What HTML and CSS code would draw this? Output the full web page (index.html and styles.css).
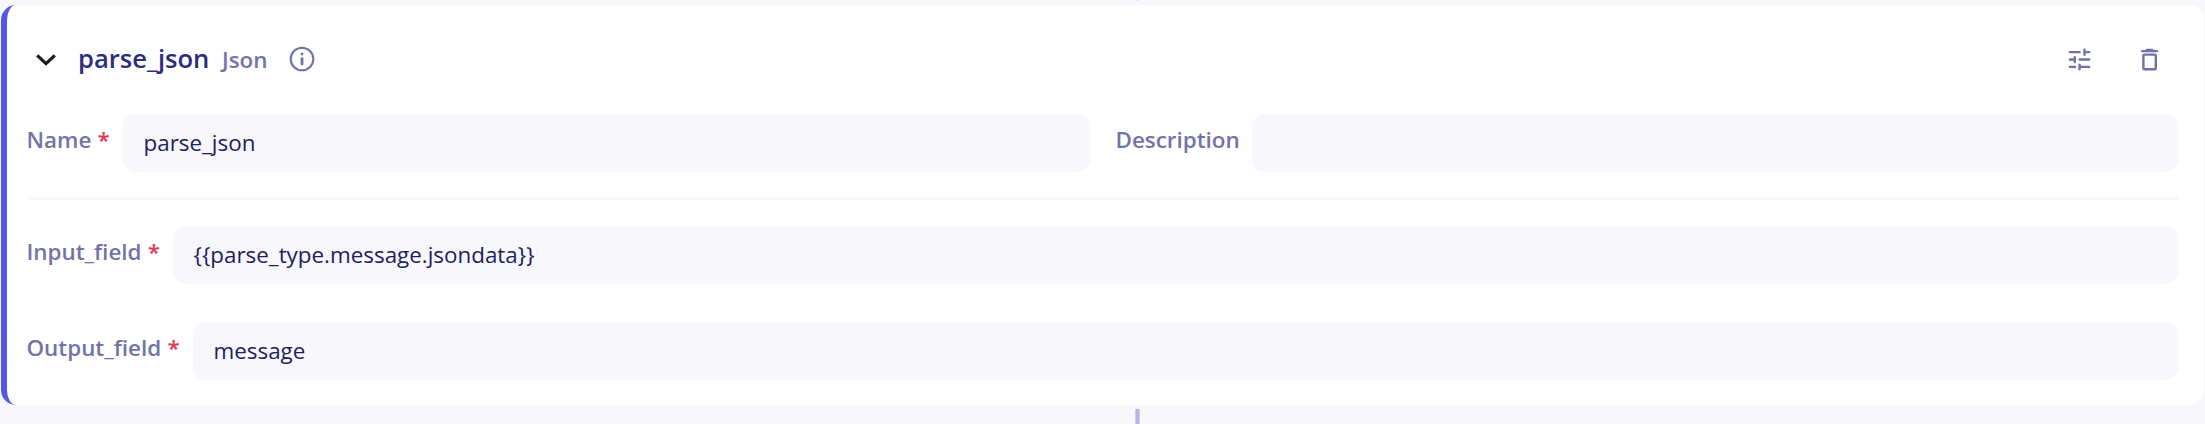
FILE: index.html
```html
<!DOCTYPE html>
<html lang="en">
<head>
<meta charset="utf-8">
<title>parse_json</title>
<link rel="stylesheet" href="styles.css">
</head>
<body>
<div class="connector connector-top"></div>
<section class="card">
  <header class="card-header">
    <svg class="chevron" viewBox="0 0 20 12"><path d="M1.2 1.4 10 9.6l8.800-8.200" /></svg>
    <h2 class="title">parse_json</h2>
    <span class="type">Json</span>
    <svg class="info" viewBox="0 0 26 26"><circle cx="13" cy="13" r="11.300"/><path d="M13 12.600v5.400"/><circle class="dot" cx="13" cy="8.100" r="1.450"/></svg>
    <div class="actions">
      <svg class="icon" viewBox="0 0 30 30"><path d="M5.900 8.100h9.700M20.500 8.100h4.700M20.500 5.800v4.900M5.900 15.500h5M10.800 13.200v4.700M15.500 15.500h9.700M5.900 22.900h5M15.600 20.600v4.700M15.600 22.900h9.600"/></svg>
      <svg class="icon" viewBox="0 0 30 30"><path d="M8.200 7.100h14.900M12.900 6h5.300"/><rect x="9.400" y="10.600" width="12.400" height="14.700" rx="1"/></svg>
    </div>
  </header>
  <div class="row row-split">
    <div class="field field-name"><label>Name <b>*</b></label><div class="input">parse_json</div></div>
    <div class="field field-desc"><label>Description</label><div class="input"></div></div>
  </div>
  <div class="divider"></div>
  <div class="row"><div class="field field-in"><label>Input_field <b>*</b></label><div class="input">{{parse_type.message.jsondata}}</div></div></div>
  <div class="row row-last"><div class="field field-out"><label>Output_field <b>*</b></label><div class="input">message</div></div></div>
</section>
<div class="connector connector-bottom"></div>
</body>
</html>
```
FILE: styles.css
```css
* { box-sizing: border-box; }
body {
  margin: 0;
  height: 424px;
  overflow: hidden;
  background: #f7f7fc;
  color: #1f2060;
  font-family: "Open Sans", "Noto Sans", sans-serif;
  font-size: 22.5px;
}
.connector { width: 5px; margin-left: 1135px; background: #b3b3e6; }
.connector-top { width: 1px; height: 1px; margin-left: 1137px; margin-bottom: 4px; }
.connector-bottom { height: 15px; margin-top: 4px; border: solid #cfcff0; border-width: 0 1px; }
.card {
  height: 400px;
  margin: 0 1px;
  padding: 0 26px 0 20px;
  background: #fff;
  border-left: 6px solid #5458e8;
  border-radius: 15px;
}
.card-header { display: flex; align-items: center; height: 109px; }
.chevron { width: 20px; height: 12px; margin-left: 9px; fill: none; stroke: #1c1c1c; stroke-width: 3.2; }
.title { margin: 0 0 0 22px; padding-bottom: 1px; width: 131px; font-size: 25.6px; font-weight: 600; line-height: 34px; color: #2c2c80; white-space: nowrap; }
.type { margin-left: 13px; width: 46px; font-size: 22.4px; font-weight: 600; color: #7274a8; }
.info { width: 26px; height: 26px; margin: 0 0 1px 21px; fill: none; stroke: #7072a6; stroke-width: 2.1; }
.info path { stroke-width: 2.8; stroke-linecap: round; }
.info .dot { fill: #7072a6; stroke: none; }
.actions { display: flex; gap: 40px; margin: 0 14px 1px auto; }
.icon { width: 30px; height: 30px; fill: none; stroke: #7072a6; stroke-width: 2.4; stroke-linecap: round; }
.row { height: 58px; display: flex; margin-bottom: 38px; }
.row-split { gap: 26px; margin-bottom: 25px; }
.field { display: grid; flex: 1; }
.field-name { flex: 0 0 1063px; grid-template-columns: 96px 1fr; }
.field-desc { grid-template-columns: 136px 1fr; }
.field-in { grid-template-columns: 146px 1fr; }
.field-out { grid-template-columns: 166px 1fr; }
label { line-height: 31px; padding-top: 10px; margin-left: -0.5px; font-size: 22.4px; font-weight: 600; color: #7274a8; white-space: nowrap; }
label b { margin-left: 0.5px; font-weight: 600; color: #e23850; }
.input { height: 58px; padding: 0 20.5px; line-height: 58px; font-size: 22.4px; border-radius: 12.5px; background: #f7f7fc; }
.divider { height: 3px; background: #f7f7fc; margin-bottom: 26px; }
.row-last { margin-bottom: 0; }
```
